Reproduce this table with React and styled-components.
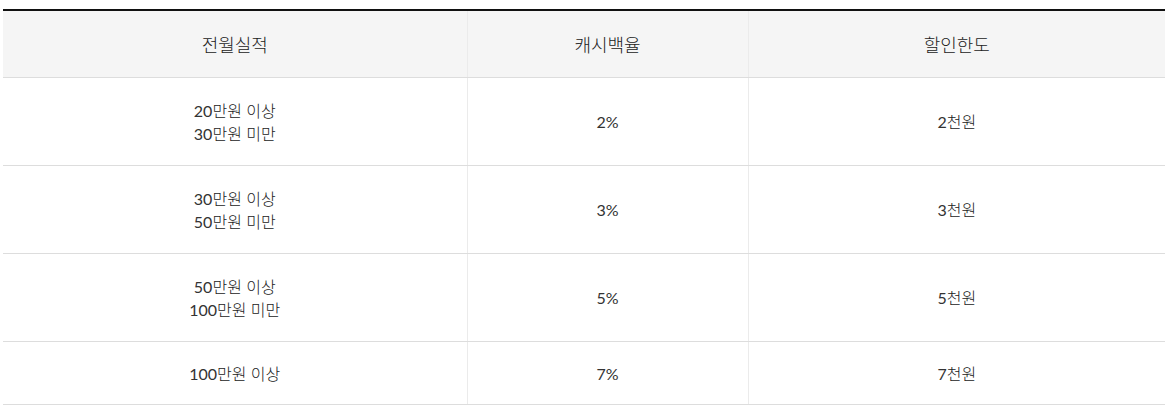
import React from "react";
import styled, { createGlobalStyle } from "styled-components";

const GlobalStyle = createGlobalStyle`
  body {
    margin: 0;
    background: #fff;
    font-family: Lato, "Noto Sans CJK KR", sans-serif;
    color: #333;
  }
`;

const rows = [
  { spend: ["20만원 이상", "30만원 미만"], rate: "2%", limit: "2천원" },
  { spend: ["30만원 이상", "50만원 미만"], rate: "3%", limit: "3천원" },
  { spend: ["50만원 이상", "100만원 미만"], rate: "5%", limit: "5천원" },
  { spend: ["100만원 이상"], rate: "7%", limit: "7천원" },
];

// digits come from Lato at regular weight, hangul stays light
function Text({ children }) {
  return children
    .split(/([0-9%]+)/)
    .filter(Boolean)
    .map((part, i) =>
      /^[0-9%]+$/.test(part) ? <Num key={i}>{part}</Num> : <span key={i}>{part}</span>
    );
}

function App() {
  return (
    <>
      <GlobalStyle />
      <Wrap>
        <Table>
          <colgroup>
            <col style={{ width: 464 }} />
            <col style={{ width: 281 }} />
            <col style={{ width: 417 }} />
          </colgroup>
          <thead>
            <tr>
              <Th>전월실적</Th>
              <Th>캐시백율</Th>
              <Th>할인한도</Th>
            </tr>
          </thead>
          <tbody>
            {rows.map((row, i) => (
              <tr key={i}>
                <Td tall={row.spend.length > 1}>
                  {row.spend.map((line, j) => (
                    <Line key={j}>
                      <Text>{line}</Text>
                    </Line>
                  ))}
                </Td>
                <Td tall={row.spend.length > 1}>
                  <Text>{row.rate}</Text>
                </Td>
                <Td tall={row.spend.length > 1}>
                  <Text>{row.limit}</Text>
                </Td>
              </tr>
            ))}
          </tbody>
        </Table>
      </Wrap>
    </>
  );
}

export default App;

const Wrap = styled.div`
  padding: 9px 2px 0 3px;
`;

const Table = styled.table`
  width: 1162px;
  border-collapse: collapse;
  table-layout: fixed;
  border-top: 2px solid #111;
`;

const Th = styled.th`
  height: 66px;
  padding: 0;
  background: #f5f5f5;
  font-size: 18px;
  font-weight: 300;
  color: #222;
  text-align: center;
  vertical-align: middle;
  border-bottom: 1px solid #ddd;
  border-left: 1px solid #ebebeb;
  &:first-child {
    border-left: 0;
  }
`;

const Td = styled.td`
  height: ${(p) => (p.tall ? "87px" : "62px")};
  padding: 0;
  font-size: 16px;
  font-weight: 300;
  line-height: 23px;
  color: #222;
  text-align: center;
  vertical-align: middle;
  border-bottom: 1px solid #ddd;
  border-left: 1px solid #ebebeb;
  &:first-child {
    border-left: 0;
  }
`;

const Line = styled.div``;

const Num = styled.span`
  font-weight: 400;
  color: #333;
`;
